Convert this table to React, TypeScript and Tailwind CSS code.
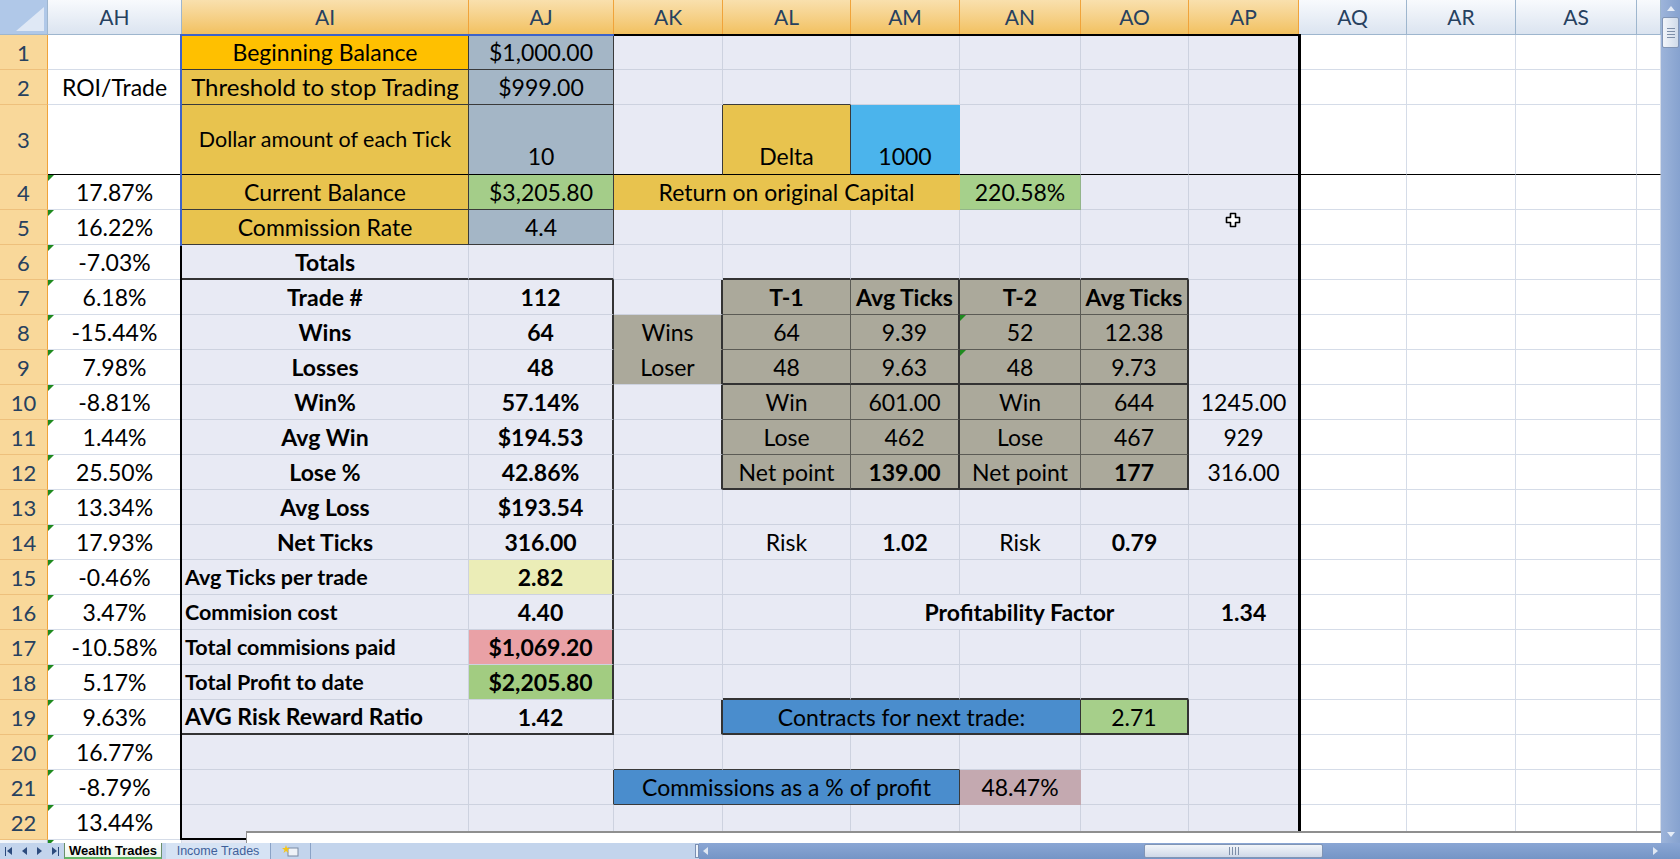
import React from 'react';
import { twMerge } from 'tailwind-merge';

type C = { t?: string; k?: string; s?: 2 | 3; tri?: boolean; cur?: boolean };

const SPAN: Record<number, string> = { 1: '', 2: 'col-span-2', 3: 'col-span-3' };

// fills (already tinted by the selection, like Excel draws them)
const GOLD = 'bg-[#e8c34e]';
const GRAYB = 'bg-[#a4b6c6]';
const GREEN = 'bg-[#a4cd89]';
const TBL = 'bg-[#aba99b] border-r-[#5b5b55] border-b-[#5b5b55]';
const DK = 'border-r-[#3a3a3a] border-b-[#3a3a3a]';
const R2 = 'border-r-2 border-r-[#333333]';
const B2 = 'border-b-2 border-b-[#333333]';
const LEFT = 'justify-start pl-[3px] font-bold text-[21.5px]';
const BOT = 'items-end pb-[4px]';

const e: C = {};

const rows: C[][] = [
  // 1
  [e, { t: 'Beginning Balance', k: `bg-[#ffc000] ${DK}` }, { t: '$1,000.00', k: `${GRAYB} ${DK}` }, e, e, e, e, e, e, e, e, e, e],
  // 2
  [{ t: 'ROI/Trade' }, { t: 'Threshold to stop Trading', k: `${GOLD} ${DK} text-[24px]` }, { t: '$999.00', k: `${GRAYB} ${DK}` }, e, { k: 'border-b-[#3a3a3a]' }, e, e, e, e, e, e, e, e],
  // 3
  [
    { k: 'border-b-black' },
    { t: 'Dollar amount of each Tick', k: `${GOLD} ${DK} border-b-black text-[21.5px]` },
    { t: '10', k: `${GRAYB} ${DK} border-b-black ${BOT}` },
    { k: 'border-r-[#3a3a3a] border-b-black' },
    { t: 'Delta', k: `${GOLD} ${DK} border-b-black ${BOT}` },
    { t: '1000', k: `bg-[#4bb4ec] border-r-[#4bb4ec] border-b-black ${BOT}` },
    { k: 'border-b-black' }, { k: 'border-b-black' }, { k: 'border-b-black' },
    { k: 'border-b-black' }, { k: 'border-b-black' }, { k: 'border-b-black' }, { k: 'border-b-black' },
  ],
  // 4
  [
    { t: '17.87%', tri: true },
    { t: 'Current Balance', k: `${GOLD} ${DK}` },
    { t: '$3,205.80', k: `${GREEN} ${DK}` },
    { t: 'Return on original Capital', s: 3, k: `${GOLD} border-r-[#e8c34e] border-b-[#e8c34e]` },
    { t: '220.58%', k: 'bg-[#a6d08b] border-r-[#93b58a] border-b-[#93b58a]' },
    e, e, e, e, e, e,
  ],
  // 5
  [{ t: '16.22%', tri: true }, { t: 'Commission Rate', k: `${GOLD} ${DK}` }, { t: '4.4', k: `${GRAYB} ${DK}` }, e, e, e, e, e, { cur: true }, e, e, e, e],
  // 6
  [{ t: '-7.03%', tri: true }, { t: 'Totals', k: `font-bold ${B2}` }, { k: B2 }, e, { k: B2 }, { k: B2 }, { k: B2 }, { k: B2 }, e, e, e, e, e],
  // 7
  [
    { t: '6.18%', tri: true }, { t: 'Trade #', k: 'font-bold' }, { t: '112', k: `font-bold ${R2}` }, { k: R2 },
    { t: 'T-1', k: `${TBL} font-bold` }, { t: 'Avg Ticks', k: `${TBL} font-bold ${R2}` },
    { t: 'T-2', k: `${TBL} font-bold` }, { t: 'Avg Ticks', k: `${TBL} font-bold ${R2}` }, e, e, e, e, e,
  ],
  // 8
  [
    { t: '-15.44%', tri: true }, { t: 'Wins', k: 'font-bold' }, { t: '64', k: `font-bold ${R2}` },
    { t: 'Wins', k: `bg-[#aba99b] border-b-[#aba99b] ${R2}` },
    { t: '64', k: TBL }, { t: '9.39', k: `${TBL} ${R2}` }, { t: '52', k: TBL, tri: true }, { t: '12.38', k: `${TBL} ${R2}` }, e, e, e, e, e,
  ],
  // 9
  [
    { t: '7.98%', tri: true }, { t: 'Losses', k: 'font-bold' }, { t: '48', k: `font-bold ${R2}` },
    { t: 'Loser', k: `bg-[#aba99b] ${R2}` },
    { t: '48', k: `${TBL} ${B2}` }, { t: '9.63', k: `${TBL} ${R2} ${B2}` }, { t: '48', k: `${TBL} ${B2}`, tri: true }, { t: '9.73', k: `${TBL} ${R2} ${B2}` }, e, e, e, e, e,
  ],
  // 10
  [
    { t: '-8.81%', tri: true }, { t: 'Win%', k: 'font-bold' }, { t: '57.14%', k: `font-bold ${R2}` }, { k: R2 },
    { t: 'Win', k: TBL }, { t: '601.00', k: `${TBL} ${R2}` }, { t: 'Win', k: TBL }, { t: '644', k: `${TBL} ${R2}` }, { t: '1245.00' }, e, e, e, e,
  ],
  // 11
  [
    { t: '1.44%', tri: true }, { t: 'Avg Win', k: 'font-bold' }, { t: '$194.53', k: `font-bold ${R2}` }, { k: R2 },
    { t: 'Lose', k: TBL }, { t: '462', k: `${TBL} ${R2}` }, { t: 'Lose', k: TBL }, { t: '467', k: `${TBL} ${R2}` }, { t: '929' }, e, e, e, e,
  ],
  // 12
  [
    { t: '25.50%', tri: true }, { t: 'Lose %', k: 'font-bold' }, { t: '42.86%', k: `font-bold ${R2}` }, { k: R2 },
    { t: 'Net point', k: `${TBL} ${B2}` }, { t: '139.00', k: `${TBL} font-bold ${R2} ${B2}` },
    { t: 'Net point', k: `${TBL} ${B2}` }, { t: '177', k: `${TBL} font-bold ${R2} ${B2}` }, { t: '316.00' }, e, e, e, e,
  ],
  // 13
  [{ t: '13.34%', tri: true }, { t: 'Avg Loss', k: 'font-bold' }, { t: '$193.54', k: `font-bold ${R2}` }, e, e, e, e, e, e, e, e, e, e],
  // 14
  [
    { t: '17.93%', tri: true }, { t: 'Net Ticks', k: 'font-bold' }, { t: '316.00', k: `font-bold ${R2}` }, e,
    { t: 'Risk' }, { t: '1.02', k: 'font-bold' }, { t: 'Risk' }, { t: '0.79', k: 'font-bold' }, e, e, e, e, e,
  ],
  // 15
  [{ t: '-0.46%', tri: true }, { t: 'Avg Ticks per trade', k: LEFT }, { t: '2.82', k: `font-bold bg-[#ebedb7] ${R2}` }, e, e, e, e, e, e, e, e, e, e],
  // 16
  [
    { t: '3.47%', tri: true }, { t: 'Commision cost', k: LEFT }, { t: '4.40', k: `font-bold ${R2}` }, e, e,
    { t: 'Profitability Factor', s: 3, k: 'font-bold' }, { t: '1.34', k: 'font-bold' }, e, e, e, e,
  ],
  // 17
  [{ t: '-10.58%', tri: true }, { t: 'Total commisions paid', k: LEFT }, { t: '$1,069.20', k: `font-bold bg-[#e9a1a6] ${R2}` }, e, e, e, e, e, e, e, e, e, e],
  // 18
  [
    { t: '5.17%', tri: true }, { t: 'Total Profit to date', k: LEFT }, { t: '$2,205.80', k: `font-bold bg-[#a2cc81] ${R2}` }, e,
    { k: B2 }, { k: B2 }, { k: B2 }, { k: B2 }, e, e, e, e, e,
  ],
  // 19
  [
    { t: '9.63%', tri: true }, { t: 'AVG Risk Reward Ratio', k: `${LEFT} text-[23px] ${B2}` }, { t: '1.42', k: `font-bold ${R2} ${B2}` }, { k: R2 },
    { t: 'Contracts for next trade:', s: 3, k: `bg-[#4a8dcd] border-r-[#333333] ${B2}` },
    { t: '2.71', k: `bg-[#a6cf8a] ${R2} ${B2}` }, e, e, e, e, e,
  ],
  // 20
  [{ t: '16.77%', tri: true }, e, e, { k: 'border-b-[#3a3a3a]' }, { k: 'border-b-[#3a3a3a]' }, { k: 'border-b-[#3a3a3a]' }, e, e, e, e, e, e, e],
  // 21
  [
    { t: '-8.79%', tri: true }, e, { k: 'border-r-[#3a3a3a]' },
    { t: 'Commissions as a % of profit', s: 3, k: `bg-[#4a8dcd] ${DK}` },
    { t: '48.47%', k: 'bg-[#c4a9b0] border-r-[#c4a9b0] border-b-[#c4a9b0]' }, e, e, e, e, e, e,
  ],
  // 22
  [{ t: '13.44%', tri: true }, e, e, e, e, e, e, e, e, e, e, e, e],
  // 23 (only a sliver shows above the tab bar)
  [{ tri: true }, e, e, e, e, e, e, e, e, e, e, e, e],
];

const HEADERS = ['AH', 'AI', 'AJ', 'AK', 'AL', 'AM', 'AN', 'AO', 'AP', 'AQ', 'AR', 'AS', ''];

function baseFor(col: number) {
  // col: 1 = AH ... 13 = AT
  if (col >= 2 && col <= 9) return 'bg-[#e8eaf4] border-r-[#cdd2df] border-b-[#cdd2df]';
  return 'bg-white border-r-[#d5dce8] border-b-[#d5dce8]';
}

function Cursor() {
  return (
    <svg className="absolute left-[36px] top-[2px]" width="16" height="16" viewBox="0 0 16 16">
      <path d="M5.5 1.5h5v4h4v5h-4v4h-5v-4h-4v-5h4z" fill="white" stroke="black" strokeWidth="1.6" strokeLinejoin="round" />
    </svg>
  );
}

function Row({ n, cells }: { n: number; cells: C[] }) {
  let col = 1;
  const selected = n <= 22;
  return (
    <>
      <div
        className={
          selected
            ? 'flex items-center justify-center border-r border-b border-r-[#f0a33a] border-b-[#eec07c] bg-[#f9d89a] text-[22px] text-[#27415f]'
            : 'flex items-center justify-center border-r border-b border-r-[#9eb6ce] border-b-[#c5d3e3] bg-linear-to-r from-[#f5f8fc] to-[#e3eaf4] text-[22px] text-[#27415f]'
        }
      >
        {selected ? n : null}
      </div>
      {cells.map((c, i) => {
        const here = col;
        col += c.s ?? 1;
        return (
          <div
            key={i}
            className={twMerge(
              'relative flex items-center justify-center whitespace-nowrap border-r border-b text-[23px] leading-[28px] text-black',
              baseFor(here),
              SPAN[c.s ?? 1],
              c.k,
            )}
          >
            {c.tri && (
              <span className="absolute left-0 top-0 h-0 w-0 border-t-[6px] border-r-[6px] border-t-[#1f8a1f] border-r-transparent" />
            )}
            {c.cur && <Cursor />}
            {c.t}
          </div>
        );
      })}
    </>
  );
}

function Arrow({ dir, className }: { dir: 'up' | 'down' | 'left' | 'right'; className?: string }) {
  const d = {
    up: 'M1 6 L5 1 L9 6 Z',
    down: 'M1 1 L5 6 L9 1 Z',
    left: 'M6 1 L1 5 L6 9 Z',
    right: 'M1 1 L6 5 L1 9 Z',
  }[dir];
  const box = dir === 'up' || dir === 'down' ? '0 0 10 7' : '0 0 7 10';
  const w = dir === 'up' || dir === 'down' ? 10 : 7;
  const h = dir === 'up' || dir === 'down' ? 7 : 10;
  return (
    <svg width={w} height={h} viewBox={box} className={className}>
      <path d={d} fill="currentColor" />
    </svg>
  );
}

function Grip({ vertical }: { vertical?: boolean }) {
  return vertical ? (
    <div className="flex flex-col gap-[2px]">
      <div className="h-px w-[8px] bg-[#7d8ea8]" />
      <div className="h-px w-[8px] bg-[#7d8ea8]" />
      <div className="h-px w-[8px] bg-[#7d8ea8]" />
      <div className="h-px w-[8px] bg-[#7d8ea8]" />
    </div>
  ) : (
    <div className="flex gap-[2px]">
      <div className="h-[8px] w-px bg-[#7d8ea8]" />
      <div className="h-[8px] w-px bg-[#7d8ea8]" />
      <div className="h-[8px] w-px bg-[#7d8ea8]" />
      <div className="h-[8px] w-px bg-[#7d8ea8]" />
    </div>
  );
}

export default function App() {
  return (
    <div className="flex h-[859px] w-[1680px] flex-col overflow-hidden bg-white font-['Lato',sans-serif]">
      <div className="flex h-[843px]">
        {/* sheet */}
        <div className="relative h-[843px] w-[1661px] overflow-hidden">
          <div className="grid grid-cols-[48px_134px_287px_145px_109px_128px_109px_121px_108px_110px_108px_109px_121px_24px] grid-rows-[35px_35px_35px_70px_repeat(20,35px)]">
            {/* corner */}
            <div className="relative border-r border-b border-r-[#9eb6ce] border-b-[#9eb6ce] bg-[#b0c8e8]">
              <svg className="absolute right-[3px] bottom-[3px]" width="28" height="24" viewBox="0 0 28 24">
                <path d="M28 0 L28 24 L0 24 Z" fill="#dfe8f5" />
              </svg>
            </div>
            {HEADERS.map((h, i) => (
              <div
                key={h + i}
                className={
                  i >= 1 && i <= 8
                    ? 'flex items-center justify-center border-r border-b border-r-[#f0a33a] border-b-[#f29436] bg-linear-to-b from-[#f9e0ad] to-[#f2c15f] text-[21px] text-[#27415f]'
                    : 'flex items-center justify-center border-r border-b border-r-[#9eb6ce] border-b-[#9eb6ce] bg-linear-to-b from-[#f8fafd] to-[#dbe4f0] text-[21px] text-[#27415f]'
                }
              >
                {h}
              </div>
            ))}
            {rows.map((cells, i) => (
              <Row key={i} n={i + 1} cells={cells} />
            ))}
          </div>

          {/* selection outline AI1:AP22 */}
          <div className="pointer-events-none absolute left-[180px] top-[34px] h-[806px] w-[1121px] border-2 border-r-[3px] border-black" />
          <div className="pointer-events-none absolute left-[180px] top-[34px] h-[212px] w-[2px] bg-[#3d63c9]" />
          <div className="pointer-events-none absolute left-[180px] top-[34px] h-[2px] w-[434px] bg-[#3d63c9]" />

          {/* strip above the tab bar */}
          <div className="absolute left-[246px] top-[831px] h-[12px] w-[1415px] border-t-2 border-l border-[#8f8f8f] bg-white" />
        </div>

        {/* vertical scrollbar */}
        <div className="flex w-[19px] flex-col bg-linear-to-r from-[#9db4da] to-[#86a2cf]">
          <div className="flex h-[17px] items-center justify-center text-[#e6edf7]">
            <Arrow dir="up" />
          </div>
          <div className="mx-[1px] flex h-[31px] items-center justify-center rounded-[2px] border border-[#8195b5] bg-linear-to-r from-[#f2f5fa] to-[#d0dbea]">
            <Grip vertical />
          </div>
          <div className="flex-1" />
          <div className="flex h-[17px] items-center justify-center text-[#e6edf7]">
            <Arrow dir="down" />
          </div>
        </div>
      </div>

      {/* tab bar + horizontal scrollbar */}
      <div className="flex h-[16px] items-stretch bg-[#c3d4ec] font-['Liberation_Sans',sans-serif] leading-none">
        <div className="flex w-[62px] items-center gap-[8px] pl-[5px] text-[#2d4b7d]">
          <div className="flex items-center">
            <div className="h-[9px] w-px bg-[#2d4b7d]" />
            <Arrow dir="left" />
          </div>
          <Arrow dir="left" />
          <Arrow dir="right" />
          <div className="flex items-center">
            <Arrow dir="right" />
            <div className="h-[9px] w-px bg-[#2d4b7d]" />
          </div>
        </div>
        <div className="ml-[2px] flex w-[98px] items-center justify-center border-x border-b-2 border-[#6a8f6a] border-b-[#63b966] bg-linear-to-b from-white to-[#eaf5ea] text-[13px] font-bold text-black">
          Wealth Trades
        </div>
        <div className="ml-[4px] flex w-[105px] items-center justify-center border-r border-[#8aa2c6] bg-[#d6e3f4] text-[12.5px] text-[#40609a]">
          Income Trades
        </div>
        <div className="flex w-[40px] items-center justify-center border-r border-[#8aa2c6]">
          <svg width="18" height="13" viewBox="0 0 18 13">
            <rect x="6" y="3" width="10" height="8" fill="#eef2f8" stroke="#7a8aa3" />
            <path d="M4 0 L5 3 L8 3 L5.5 5 L6.5 8 L4 6 L1.5 8 L2.5 5 L0 3 L3 3 Z" fill="#f5c518" />
          </svg>
        </div>
        <div className="w-[384px]" />
        <div className="my-[1px] w-[4px] border border-[#7a8fb3] bg-[#eef3fa]" />
        <div className="flex flex-1 items-stretch bg-linear-to-b from-[#8aa6d4] to-[#7595c6]">
          <div className="flex w-[12px] items-center justify-center text-[#dfe7f3]">
            <Arrow dir="left" />
          </div>
          <div className="w-[433px]" />
          <div className="my-[1px] flex w-[179px] items-center justify-center rounded-[2px] border border-[#8195b5] bg-linear-to-b from-[#f2f5fa] to-[#cfd9e8]">
            <Grip />
          </div>
          <div className="flex-1" />
          <div className="flex w-[30px] items-center justify-start pl-[2px] text-[#dfe7f3]">
            <Arrow dir="right" />
          </div>
        </div>
      </div>
    </div>
  );
}
